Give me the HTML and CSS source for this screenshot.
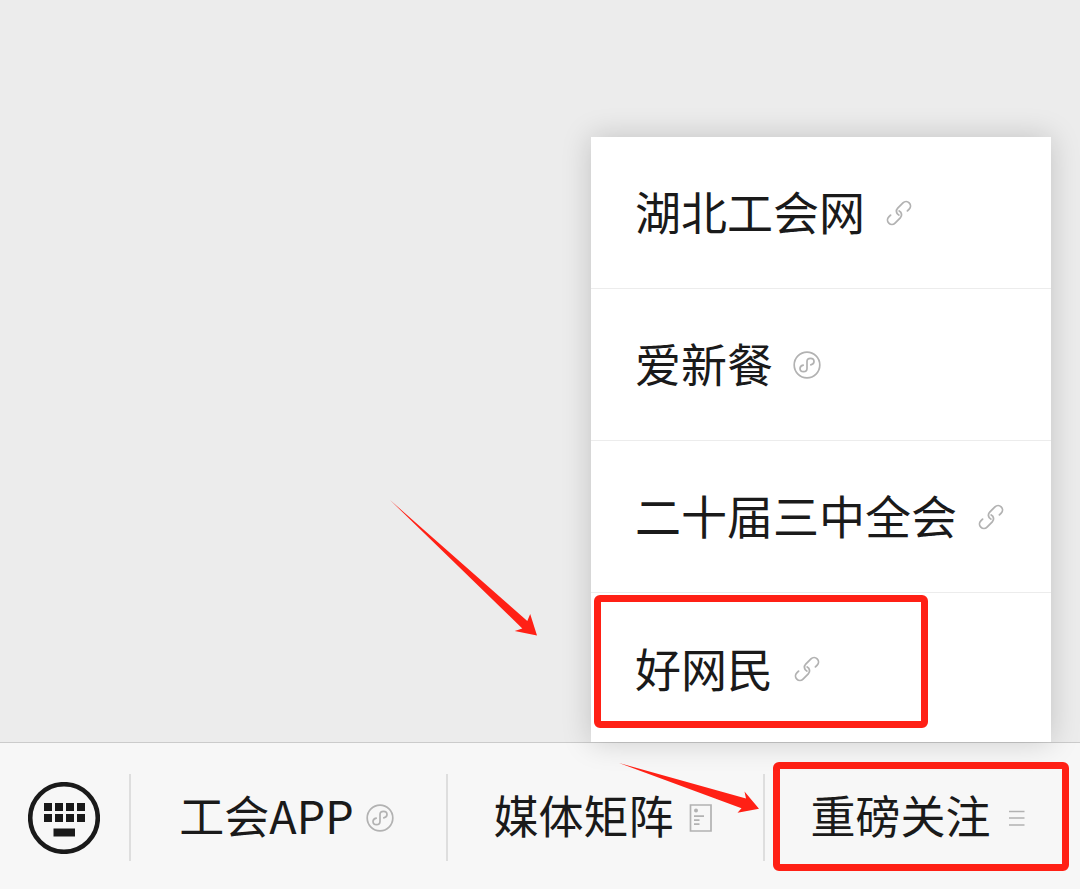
FILE: index.html
```html
<!DOCTYPE html>
<html lang="zh-CN">
<head>
<meta charset="utf-8">
<meta name="viewport" content="width=device-width, initial-scale=1">
<title>重磅关注</title>
<link rel="stylesheet" href="styles.css">
</head>
<body>
<svg class="symbols" aria-hidden="true">
  <symbol id="icon-link" viewBox="0 0 28 28">
    <g transform="translate(14 14) rotate(-45)" fill="none" stroke="currentColor" stroke-width="1.8" stroke-linecap="round">
      <path d="M7.500 4.400H10A4.400 4.400 0 0 0 10 -4.400H2.600A4.400 4.400 0 0 0 -1.600 1.300"/>
      <path d="M-7.500 -4.400H-10A4.400 4.400 0 0 0 -10 4.400H-2.600A4.400 4.400 0 0 0 1.600 -1.300"/>
    </g>
  </symbol>
  <symbol id="icon-mini" viewBox="0 0 28 28">
    <g fill="none" stroke="currentColor" stroke-width="1.7" stroke-linecap="round">
      <circle cx="14" cy="14" r="12.8"/>
      <path d="M17.8 13.9C20 13.4 21 12.2 21 10.6C21 8.6 19.4 7.4 17.5 7.4C15.5 7.4 14 8.7 14 10.6V17.4C14 19.3 12.5 20.6 10.5 20.6C8.6 20.6 7 19.4 7 17.4C7 15.8 8 14.6 10.2 14.1"/>
    </g>
  </symbol>
</svg>

<main class="chat"></main>

<nav class="bar">
  <button class="keyboard" type="button" aria-label="键盘">
    <svg class="keyboard-icon" viewBox="0 0 72 72" aria-hidden="true">
      <circle cx="36" cy="36" r="33.8" fill="none" stroke="currentColor" stroke-width="4.6"/>
      <g fill="currentColor">
        <path d="M16 21h8v8h-8zM27 21h8v8h-8zM38 21h8v8h-8zM49 21h8v8h-8z"/>
        <path d="M16 32h8v8h-8zM27 32h8v8h-8zM38 32h8v8h-8zM49 32h8v8h-8z"/>
        <path d="M25.500 46.500h21.500v8h-21.500z"/>
      </g>
    </svg>
  </button>

  <div class="tab">
    <button class="tab-button" type="button">
      <span class="label">工会APP</span>
      <svg class="icon" aria-hidden="true"><use href="#icon-mini"/></svg>
    </button>
  </div>

  <div class="tab">
    <button class="tab-button" type="button">
      <span class="label">媒体矩阵</span>
      <svg class="icon" viewBox="0 0 28 28" aria-hidden="true">
        <path d="M4.500 1h20.500v26h-20.500z" fill="none" stroke="currentColor" stroke-width="1.700"/>
        <circle cx="10" cy="6.500" r="2" fill="currentColor"/>
        <path d="M8 12.200h10M8 16.200h5.500M8 20.200h5.500" stroke="currentColor" stroke-width="1.700"/>
      </svg>
    </button>
  </div>

  <div class="tab">
    <button class="tab-button" type="button" aria-expanded="true">
      <span class="label">重磅关注</span>
      <svg class="icon" viewBox="0 0 28 28" aria-hidden="true">
        <path d="M6 7.500h15.500M6 14h15.500M6 21h15.500" stroke="currentColor" stroke-width="1.700"/>
      </svg>
    </button>
    <span class="frame frame-tab"></span>

    <ul class="menu">
      <li class="menu-item"><a class="menu-link" href="#"><span class="label">湖北工会网</span><svg class="icon" aria-hidden="true"><use href="#icon-link"/></svg></a></li>
      <li class="menu-item"><a class="menu-link" href="#"><span class="label">爱新餐</span><svg class="icon" aria-hidden="true"><use href="#icon-mini"/></svg></a></li>
      <li class="menu-item"><a class="menu-link" href="#"><span class="label">二十届三中全会</span><svg class="icon" aria-hidden="true"><use href="#icon-link"/></svg></a></li>
      <li class="menu-item"><a class="menu-link" href="#"><span class="label">好网民</span><svg class="icon" aria-hidden="true"><use href="#icon-link"/></svg></a>
        <span class="frame frame-item"></span>
        <svg class="arrow arrow-item" viewBox="0 0 150 140" aria-hidden="true">
          <path d="M1 1L138.300 122L141.200 115L148 136.500L125.700 132L133.300 129.500Z"/>
        </svg>
      </li>
    </ul>
    <svg class="arrow arrow-tab" viewBox="0 0 142 54" aria-hidden="true">
      <path d="M1 2L128 37.500L126.500 30.500L141 47.700L119.500 51.700L123.500 47.300Z"/>
    </svg>
  </div>
</nav>
</body>
</html>
```

FILE: styles.css
```css
* {
  box-sizing: border-box;
}

body {
  margin: 0;
  min-height: 100vh;
  display: flex;
  flex-direction: column;
  background: #ececec;
  color: #1a1a1a;
  font-family: "Noto Sans CJK SC", sans-serif;
}

button {
  margin: 0;
  padding: 0;
  border: 0;
  background: none;
  color: inherit;
  font: inherit;
  cursor: pointer;
}

.symbols {
  position: absolute;
  width: 0;
  height: 0;
}

.chat {
  flex: 1;
}

.bar {
  display: grid;
  grid-template-columns: 129px repeat(3, 1fr);
  align-items: center;
  padding: 31px 0 28px;
  border-top: 1px solid #cbcbcb;
  background: #f7f7f7;
}

.keyboard {
  display: flex;
  justify-content: center;
  padding-right: 2px;
}

.keyboard-icon {
  width: 72px;
  height: 72px;
}

.tab {
  position: relative;
  height: 87px;
  border-left: 2px solid #dedede;
}

.tab-button {
  display: flex;
  align-items: center;
  justify-content: center;
  gap: 12px;
  width: 100%;
  height: 100%;
  padding-right: 4px;
  font-size: 45px;
  line-height: 60px;
  white-space: nowrap;
}

.label {
  padding-bottom: 5px;
}

.icon {
  flex: none;
  width: 28px;
  height: 28px;
  color: #b2b2b2;
}

.menu {
  position: absolute;
  right: 29px;
  bottom: 119px;
  width: 460px;
  margin: 0;
  padding: 0;
  list-style: none;
  background: #fff;
  box-shadow: 0 0 28px rgba(0, 0, 0, 0.18);
}

.menu-item {
  position: relative;
  border-bottom: 1px solid #ececec;
}

.menu-link {
  display: flex;
  align-items: center;
  gap: 20px;
  height: 151px;
  padding-left: 44px;
  color: inherit;
  font-size: 46px;
  text-decoration: none;
  white-space: nowrap;
}

.menu-item:last-child {
  border-bottom: 0;
}

.menu-item:last-child .menu-link {
  height: 149px;
  padding-top: 3px;
}

.frame {
  position: absolute;
  border: 7px solid #ff2015;
  border-radius: 6px;
  pointer-events: none;
}

.frame-item {
  top: 2px;
  left: 3px;
  width: 334px;
  height: 133px;
}

.frame-tab {
  top: -12px;
  left: 8px;
  right: 11px;
  height: 109px;
}

.arrow {
  position: absolute;
  fill: #ff2015;
  pointer-events: none;
}

.arrow-item {
  top: -94px;
  left: -202px;
  width: 150px;
  height: 140px;
}

.arrow-tab {
  top: -13px;
  left: -147px;
  width: 142px;
  height: 54px;
}
```
